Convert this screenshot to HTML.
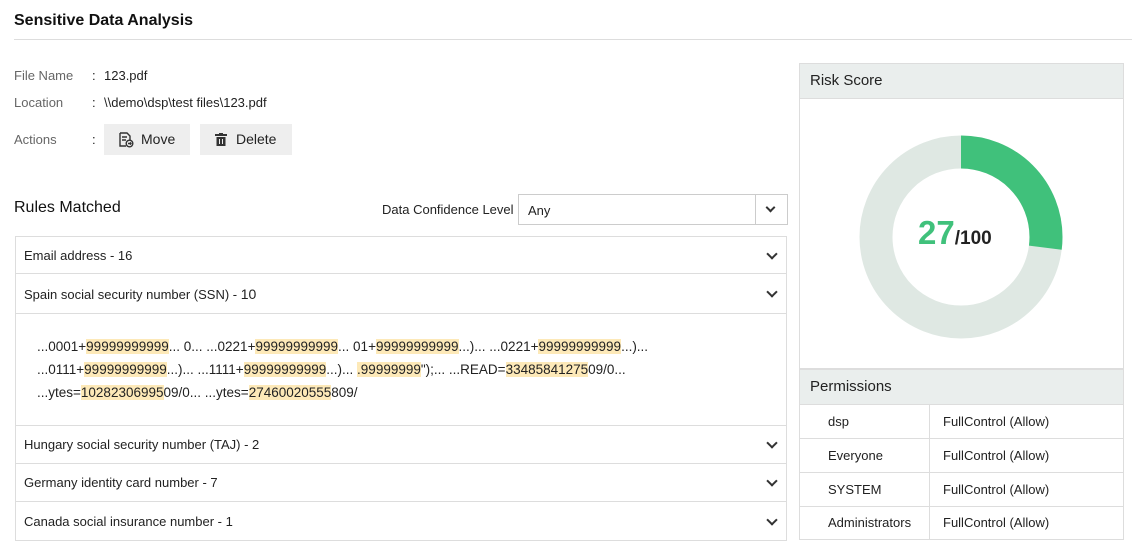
<!DOCTYPE html>
<html><head><meta charset="utf-8"><style>
*{margin:0;padding:0;box-sizing:border-box}
body{width:1132px;height:541px;overflow:hidden;background:#fff;font-family:"Liberation Sans",sans-serif;color:#222;position:relative;font-size:13px}
.a{position:absolute;white-space:nowrap}
.lbl{color:#666}
.btn{position:absolute;background:#eee;height:31px;top:124px;font-size:14px;line-height:31px}
.row{position:absolute;left:15px;width:772px;border:1px solid #ddd;font-size:13px}
.chev{position:absolute;right:10px;width:8px;height:8px;border-right:2px solid #333;border-bottom:2px solid #333;transform:rotate(45deg)}
.hl{background:#fde9b8}
.sn{font-size:13.5px;line-height:23px}
.ph{position:absolute;left:799px;width:325px;background:#eaeeed;border:1px solid #ddd;font-size:15px;padding-left:10px}
.pr{position:absolute;left:799px;width:325px;border:1px solid #ddd;border-top:none;height:34px;font-size:13px;line-height:33px}
.pr span{position:absolute}
</style></head><body>
<div class="a" style="left:14px;top:12px;font-size:16px;font-weight:bold;color:#111">Sensitive Data Analysis</div>
<div class="a" style="left:14px;top:39px;width:1118px;border-top:1px solid #ddd"></div>

<div class="a lbl" style="left:14px;top:68px">File Name</div><div class="a" style="left:92px;top:68px">:</div><div class="a" style="left:104px;top:68px">123.pdf</div>
<div class="a lbl" style="left:14px;top:95px">Location</div><div class="a" style="left:92px;top:95px">:</div><div class="a" style="left:104px;top:95px">\\demo\dsp\test files\123.pdf</div>
<div class="a lbl" style="left:14px;top:132px">Actions</div><div class="a" style="left:92px;top:132px">:</div>
<div class="btn" style="left:104px;width:86px"><svg style="position:absolute;left:14px;top:8px" width="16" height="16" viewBox="0 0 16 16" fill="none" stroke="#333" stroke-width="1.4"><path d="M2 1h7l3 3v4M2 1v13h6M4 5h5M4 8h4"/><circle cx="11.5" cy="11.5" r="3.3"/><path d="M10 11.5h3M12 10.3l1 1.2-1 1.2"/></svg><span style="position:absolute;left:37px">Move</span></div>
<div class="btn" style="left:200px;width:92px"><svg style="position:absolute;left:15px;top:9px" width="12" height="13" viewBox="0 0 12 13"><rect x="0" y="1" width="12" height="2" fill="#333"/><rect x="4" y="0" width="4" height="2" fill="#333"/><path d="M1.5 4h9v9h-9z" fill="#333"/><path d="M4.5 6v5M7.5 6v5" stroke="#eee" stroke-width="1"/></svg><span style="position:absolute;left:36px">Delete</span></div>

<div class="a" style="left:14px;top:199px;font-size:16px;color:#111">Rules Matched</div>
<div class="a" style="left:382px;top:202px">Data Confidence Level</div>
<div class="a" style="left:518px;top:194px;width:270px;height:31px;border:1px solid #ccc"><span class="a" style="left:9px;top:8px">Any</span><div class="a" style="left:236px;top:0;width:1px;height:29px;background:#ccc"></div><div class="chev" style="right:13px;top:9px;width:7px;height:7px"></div></div>

<div class="row" style="top:236px;height:38px"><span class="a" style="left:8px;top:11px">Email address - 16</span><div class="chev" style="top:13px"></div></div>
<div class="row" style="top:273px;height:153px"><span class="a" style="left:8px;top:12px">Spain social security number (SSN) - <span style="font-size:14px">10</span></span><div class="chev" style="top:14px"></div>
<div class="a" style="left:-1px;top:39px;width:772px;border-top:1px solid #ddd"></div>
<div class="a sn" style="left:21px;top:61px">...0001+<span class="hl">99999999999</span>... 0... ...0221+<span class="hl">99999999999</span>... 01+<span class="hl">99999999999</span>...)... ...0221+<span class="hl">99999999999</span>...)...</div>
<div class="a sn" style="left:21px;top:84px">...0111+<span class="hl">99999999999</span>...)... ...1111+<span class="hl">99999999999</span>...)... <span class="hl">.99999999</span>");... ...READ=<span class="hl">33485841275</span>09/0...</div>
<div class="a sn" style="left:21px;top:107px">...ytes=<span class="hl">10282306995</span>09/0... ...ytes=<span class="hl">27460020555</span>809/</div>
</div>
<div class="row" style="top:425px;height:39px"><span class="a" style="left:8px;top:11px">Hungary social security number (TAJ) - 2</span><div class="chev" style="top:13px"></div></div>
<div class="row" style="top:463px;height:39px"><span class="a" style="left:8px;top:11px">Germany identity card number - 7</span><div class="chev" style="top:13px"></div></div>
<div class="row" style="top:501px;height:40px"><span class="a" style="left:8px;top:12px">Canada social insurance number - 1</span><div class="chev" style="top:14px"></div></div>

<div class="a" style="left:799px;top:63px;width:325px;height:306px;border:1px solid #ddd"></div>
<div class="ph" style="top:63px;height:36px;line-height:34px">Risk Score</div>
<svg class="a" style="left:859px;top:135px" width="204" height="204" viewBox="0 0 204 204"><circle cx="102" cy="102" r="85" fill="none" stroke="#dfe8e3" stroke-width="33"/><circle cx="102" cy="102" r="85" fill="none" stroke="#40c17b" stroke-width="33" stroke-dasharray="144.2 400" transform="rotate(-90 102 102)"/></svg>
<div class="a" style="left:918px;top:214px;font-size:33px;font-weight:bold;color:#40c17b">27<span style="font-size:19px;color:#222">/100</span></div>

<div class="ph" style="top:369px;height:36px;line-height:34px">Permissions</div>
<div class="pr" style="top:405px"><span style="left:28px">dsp</span><span style="left:129px;top:0;height:33px;border-left:1px solid #ddd"></span><span style="left:143px">FullControl (Allow)</span></div>
<div class="pr" style="top:439px"><span style="left:28px">Everyone</span><span style="left:129px;top:0;height:33px;border-left:1px solid #ddd"></span><span style="left:143px">FullControl (Allow)</span></div>
<div class="pr" style="top:473px"><span style="left:28px">SYSTEM</span><span style="left:129px;top:0;height:33px;border-left:1px solid #ddd"></span><span style="left:143px">FullControl (Allow)</span></div>
<div class="pr" style="top:506px"><span style="left:28px">Administrators</span><span style="left:129px;top:0;height:33px;border-left:1px solid #ddd"></span><span style="left:143px">FullControl (Allow)</span></div>
</body></html>
